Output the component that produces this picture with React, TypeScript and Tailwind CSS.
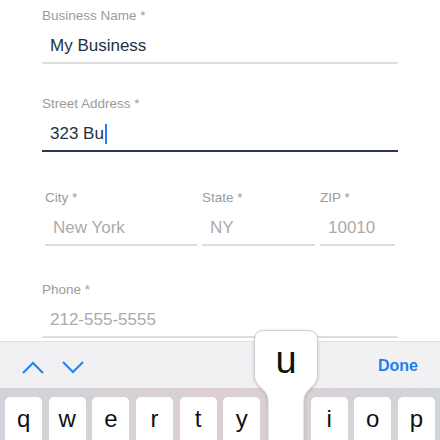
import React from 'react'

const FONT = { fontFamily: '"Liberation Sans", Arial, sans-serif' }

function Field({
  label,
  value,
  placeholder,
  focused,
  cursor,
}: {
  label: string
  value?: string
  placeholder?: string
  focused?: boolean
  cursor?: boolean
}) {
  return (
    <div className="flex flex-col">
      <div className="text-[13.5px] leading-[16px] text-[#9b9b9b] whitespace-nowrap">{label}</div>
      <div
        className={
          'mt-[10px] pl-[8px] pb-[4px] border-b-2 ' +
          (focused ? 'border-[#2a3a4a]' : 'border-[#dedede]')
        }
      >
        <div className="h-[24px] text-[17px] leading-[24px] flex items-center whitespace-nowrap">
          {value ? (
            <span className="text-[#26323f]">{value}</span>
          ) : (
            <span className="text-[#ababab]">{placeholder}</span>
          )}
          {cursor && <span className="ml-[1px] inline-block w-[2px] h-[20px] bg-[#2b7cf6]" />}
        </div>
      </div>
    </div>
  )
}

const KEYS = ['q', 'w', 'e', 'r', 't', 'y', 'u', 'i', 'o', 'p']

export default function App() {
  return (
    <div className="relative w-[440px] h-[440px] overflow-hidden bg-white flex flex-col" style={FONT}>
      {/* Form */}
      <div className="flex flex-col pl-[42px] pr-[42px] pt-[8px]">
        <Field label="Business Name *" value="My Business" />
        <div className="mt-[32px]">
          <Field label="Street Address *" value="323 Bu" focused cursor />
        </div>
        <div className="mt-[38px] flex gap-[5px] px-[3px]">
          <div className="w-[152px]">
            <Field label="City *" placeholder="New York" />
          </div>
          <div className="w-[113px]">
            <Field label="State *" placeholder="NY" />
          </div>
          <div className="flex-1">
            <Field label="ZIP *" placeholder="10010" />
          </div>
        </div>
        <div className="mt-[36px]">
          <Field label="Phone *" placeholder="212-555-5555" />
        </div>
      </div>

      {/* Keyboard */}
      <div className="mt-auto h-[99px] flex flex-col">
        <div className="h-[47px] bg-[#f1f1f3] border-t border-[#e2e2e4] flex items-center pl-[22px] pr-[22px]">
          <div className="flex items-center gap-[18px] mt-[4px]">
            <svg width="22" height="13" viewBox="0 0 22 13">
              <polyline points="1,12 11,2 21,12" fill="none" stroke="#1b82f2" strokeWidth="2" />
            </svg>
            <svg width="22" height="13" viewBox="0 0 22 13">
              <polyline points="1,1 11,11 21,1" fill="none" stroke="#1b82f2" strokeWidth="2" />
            </svg>
          </div>
          <div className="ml-auto text-[16px] font-bold text-[#1a80f2] mt-[2px]">Done</div>
        </div>
        <div className="flex-1 bg-linear-to-r from-[#d0d3d8] via-[#dccfd3] to-[#d1d4d9] pt-[9px] px-[5px] overflow-hidden">
          <div className="grid grid-cols-10 gap-[6.5px]">
            {KEYS.map((k) =>
              k === 'u' ? (
                <div key={k} className="h-[50px]" />
              ) : (
                <div
                  key={k}
                  className="h-[50px] rounded-[5px] bg-white flex justify-center pt-[10px] text-[24px] leading-[24px] text-[#111]"
                >
                  {k}
                </div>
              ),
            )}
          </div>
        </div>
      </div>

      {/* Key popup */}
      <div className="absolute left-[254px] top-[330px] w-[64px] h-[110px]">
        <svg
          width="64"
          height="110"
          viewBox="0 0 64 110"
          className="absolute inset-0 overflow-visible drop-shadow-[0_1px_1.5px_rgba(0,0,0,0.18)]"
        >
          <path
            d="M 10 0.5 H 54 Q 63.5 0.5 63.5 10 V 46 C 63.5 56 50 60 50 70 V 112 H 14 V 70 C 14 60 0.5 56 0.5 46 V 10 Q 0.5 0.5 10 0.5 Z"
            fill="#ffffff"
            stroke="#cfcfd3"
            strokeWidth="1"
          />
        </svg>
        <div className="relative flex justify-center pt-[10px] text-[38px] leading-[40px] text-[#111]">u</div>
      </div>
    </div>
  )
}
